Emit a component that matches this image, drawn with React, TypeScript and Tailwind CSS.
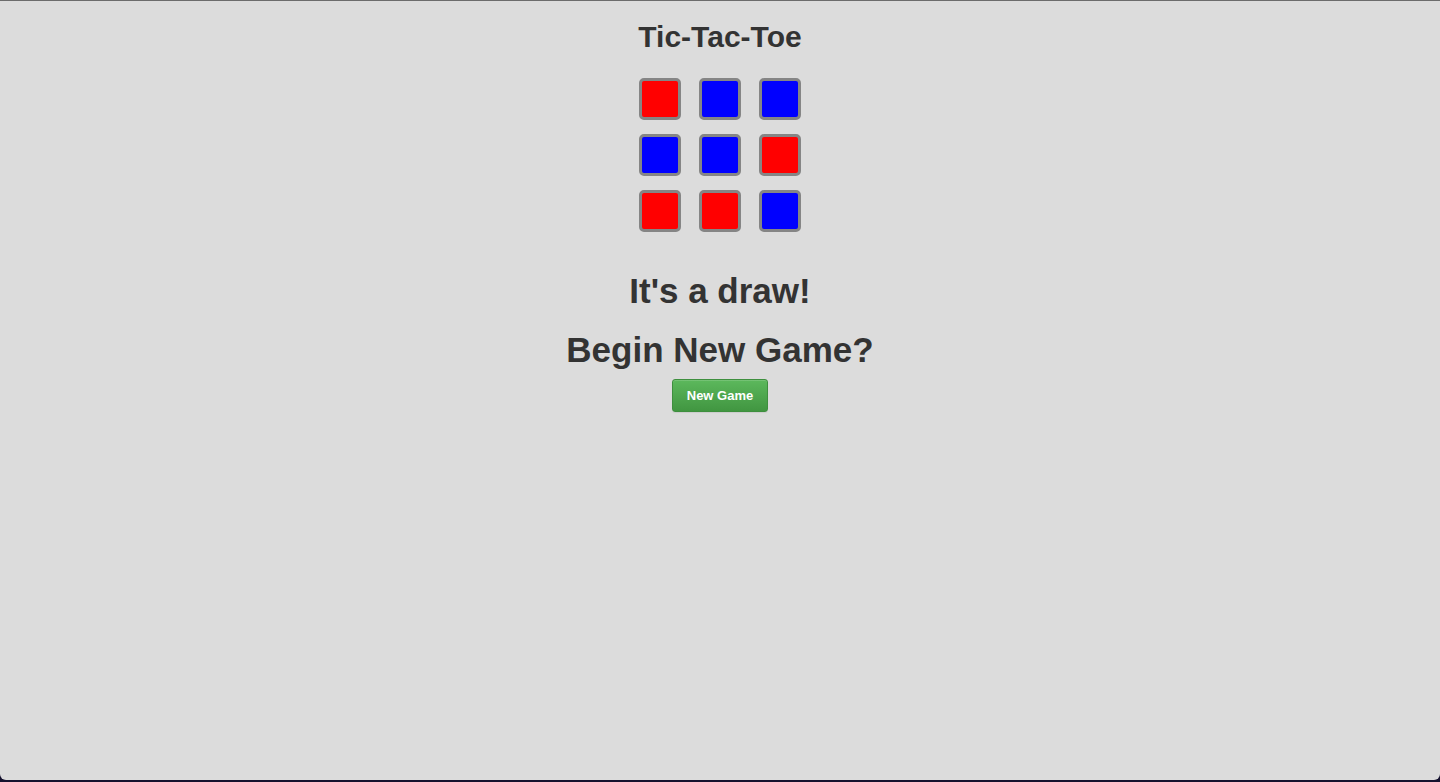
const board: ('x' | 'o')[] = ['x', 'o', 'o', 'o', 'o', 'x', 'x', 'x', 'o'];

function Cell({ mark }: { mark: 'x' | 'o' }) {
  return (
    <div
      className={`h-[42px] w-[42px] rounded-[5px] border-[3px] border-[#858585] ${
        mark === 'x' ? 'bg-[#ff0000]' : 'bg-[#0000ff]'
      }`}
    />
  );
}

export default function App() {
  return (
    <div className="flex h-[782px] w-full flex-col bg-[#15112e]">
      <div
        className="flex flex-1 flex-col items-center rounded-b-[6px] border-t border-[#6c6c6c] bg-[#dcdcdc] text-[#333333] mb-[2px]"
        style={{ fontFamily: '"Liberation Sans", Arial, sans-serif' }}
      >
        <h2 className="mt-[19px] text-[30px] leading-[33px] font-bold">Tic-Tac-Toe</h2>
        <div className="mt-[25px] grid grid-cols-[repeat(3,42px)] gap-x-[18px] gap-y-[14px]">
          {board.map((m, i) => (
            <Cell key={i} mark={m} />
          ))}
        </div>
        <h1 className="mt-[39px] text-[35px] leading-[40px] font-bold">It's a draw!</h1>
        <h1 className="mt-[19px] text-[35px] leading-[40px] font-bold">Begin New Game?</h1>
        <button className="mt-[9px] h-[33px] w-[96px] rounded-[3px] border border-[#3e8f3e] bg-gradient-to-b from-[#5cb85c] to-[#419641] text-[13px] font-bold text-white shadow-[inset_0_1px_0_rgba(255,255,255,0.15),0_1px_1px_rgba(0,0,0,0.075)]">
          New Game
        </button>
      </div>
    </div>
  );
}
